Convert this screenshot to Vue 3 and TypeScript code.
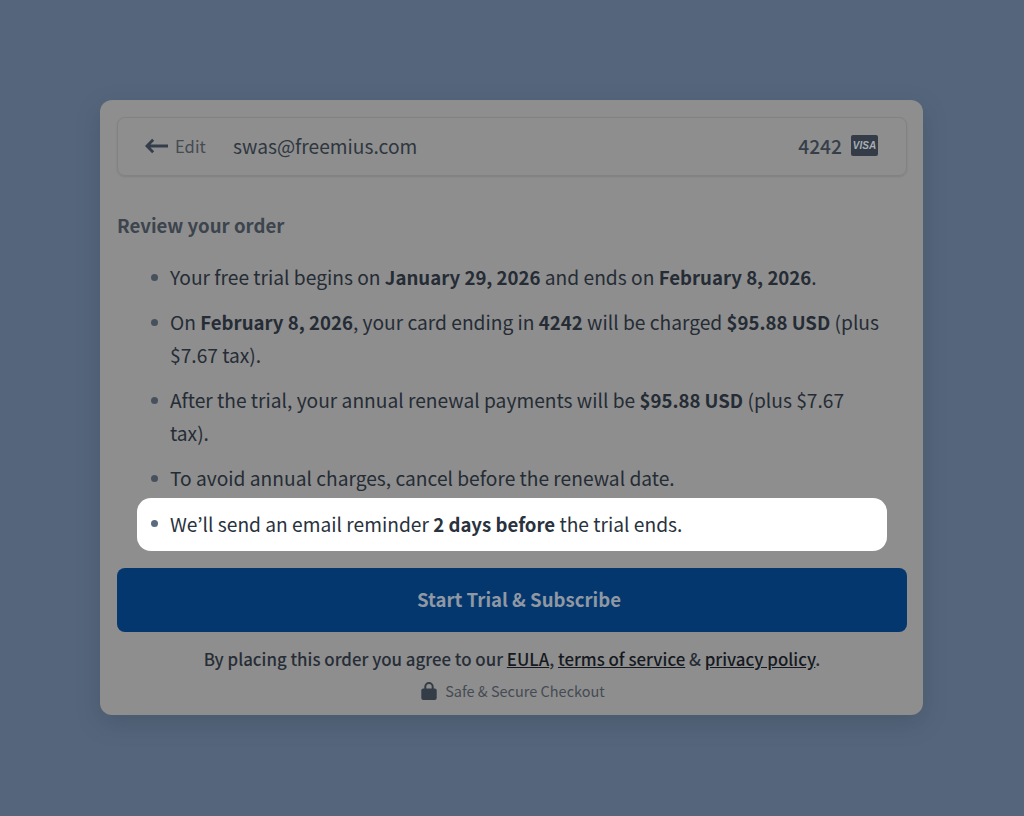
<script setup lang="ts">
interface Part { t: string; b?: boolean }
const items: Part[][] = [
  [{ t: 'Your free trial begins on ' }, { t: 'January 29, 2026', b: true }, { t: ' and ends on ' }, { t: 'February 8, 2026', b: true }, { t: '.' }],
  [{ t: 'On ' }, { t: 'February 8, 2026', b: true }, { t: ', your card ending in ' }, { t: '4242', b: true }, { t: ' will be charged ' }, { t: '$95.88 USD', b: true }, { t: ' (plus $7.67 tax).' }],
  [{ t: 'After the trial, your annual renewal payments will be ' }, { t: '$95.88 USD', b: true }, { t: ' (plus $7.67 tax).' }],
  [{ t: 'To avoid annual charges, cancel before the renewal date.' }],
]
const reminder: Part[] = [{ t: 'We’ll send an email reminder ' }, { t: '2 days before', b: true }, { t: ' the trial ends.' }]
</script>

<template>
  <div class="page">
    <section class="card">
      <header class="account">
        <div class="edit">
          <svg class="arrow" viewBox="0 0 24 16" width="23" height="16" aria-hidden="true">
            <path d="M24 8H2M8.500 1.500 2 8l6.500 6.500" fill="none" stroke="#333e4a" stroke-width="3" />
          </svg>
          <span>Edit</span>
        </div>
        <span class="email">swas@freemius.com</span>
        <span class="digits">4242</span>
        <span class="visa">VISA</span>
      </header>

      <h2 class="title">Review your order</h2>

      <ul class="list">
        <li v-for="(item, i) in items" :key="i" class="row">
          <template v-for="(p, j) in item" :key="j"><strong v-if="p.b">{{ p.t }}</strong><template v-else>{{ p.t }}</template></template>
        </li>
        <li class="row highlight">
          <template v-for="(p, j) in reminder" :key="j"><strong v-if="p.b">{{ p.t }}</strong><template v-else>{{ p.t }}</template></template>
        </li>
      </ul>

      <button class="cta" type="button">Start Trial &amp; Subscribe</button>

      <p class="terms">
        By placing this order you agree to our <a>EULA</a>, <a>terms of service</a> &amp; <a>privacy policy</a>.
      </p>
      <div class="secure">
        <svg viewBox="0 0 16 18" width="16" height="18" aria-hidden="true">
          <path d="M4.300 8V4.700a3.700 3.700 0 0 1 7.400 0V8" fill="none" stroke="#333c47" stroke-width="2" />
          <rect x="0.300" y="6.500" width="15.400" height="11.500" rx="2" fill="#333c47" />
        </svg>
        <span>Safe &amp; Secure Checkout</span>
      </div>
    </section>
  </div>
</template>

<style>
html, body { margin: 0; background: #55667c; }
</style>

<style scoped>
.page {
  min-height: 816px;
  box-sizing: border-box;
  padding: 100px 100px 0 100px;
  background: #55667c;
  font-family: "Noto Sans CJK KR", "Noto Sans", sans-serif;
  color: #252c35;
}
.card {
  width: 823px;
  height: 615px;
  box-sizing: border-box;
  padding: 17px 16px 0 17px;
  background: #8e8e8e;
  border-radius: 12px;
  box-shadow: 0 8px 24px rgba(30, 40, 60, 0.22);
}
.account {
  height: 59px;
  box-sizing: border-box;
  display: flex;
  align-items: center;
  padding: 0 28px 2px 27px;
  border: 1px solid #828282;
  border-radius: 8px;
  box-shadow: 0 1px 2px rgba(0, 0, 0, 0.1);
}
.edit {
  display: flex;
  align-items: center;
  gap: 7px;
  width: 88px;
  font-size: 16.600px;
  line-height: 24px;
  color: #454b52;
}
.email {
  flex: 1;
  font-size: 19.200px;
  line-height: 28px;
  color: #2f3740;
}
.digits {
  font-size: 19.200px;
  line-height: 28px;
  font-weight: 500;
  color: #363f49;
  margin-right: 9px;
}
.visa {
  width: 27px;
  height: 21px;
  border-radius: 2px;
  background: #333c47;
  color: #a9aeb4;
  font-family: "Liberation Sans", sans-serif;
  font-size: 10px;
  font-weight: 700;
  font-style: italic;
  line-height: 21px;
  text-align: center;
}
.title {
  margin: 35px 0 0;
  font-size: 18.600px;
  line-height: 28px;
  font-weight: 700;
  color: #3c444d;
}
.list {
  list-style: none;
  margin: 22px 0 0;
  padding: 0;
}
.row {
  position: relative;
  margin: 0 0 12px;
  padding: 0 20px 0 53px;
  font-size: 19.220px;
  line-height: 33px;
  color: #252c35;
}
.row::before {
  content: "";
  position: absolute;
  left: 34px;
  top: 13px;
  width: 7px;
  height: 7px;
  border-radius: 50%;
  background: #47515d;
}
.row strong { font-weight: 700; font-size: 18.600px; line-height: 1; }
.highlight {
  width: 750px;
  box-sizing: border-box;
  margin: -9px 0 0 20px;
  padding: 10px 0 10px 33px;
  background: #fff;
  border-radius: 14px;
  color: #29323d;
}
.highlight::before { left: 14px; top: 22px; background: #5a6b80; }
.cta {
  display: block;
  width: 790px;
  height: 64px;
  margin-top: 17px;
  padding: 0 0 4px 14px;
  border: 0;
  border-radius: 8px;
  background: #05376f;
  color: #8f98a3;
  font-family: inherit;
  font-size: 18.600px;
  font-weight: 700;
}
.terms {
  margin: 14px 0 0;
  text-align: center;
  font-size: 16.850px;
  line-height: 26px;
  font-weight: 500;
  color: #262d36;
}
.terms a { text-decoration: underline; color: #15191f; font-weight: 500; }
.secure {
  margin-top: 7px;
  padding-left: 2px;
  display: flex;
  justify-content: center;
  align-items: center;
  gap: 8px;
  font-size: 14.500px;
  line-height: 24px;
  color: #454b52;
}
</style>
